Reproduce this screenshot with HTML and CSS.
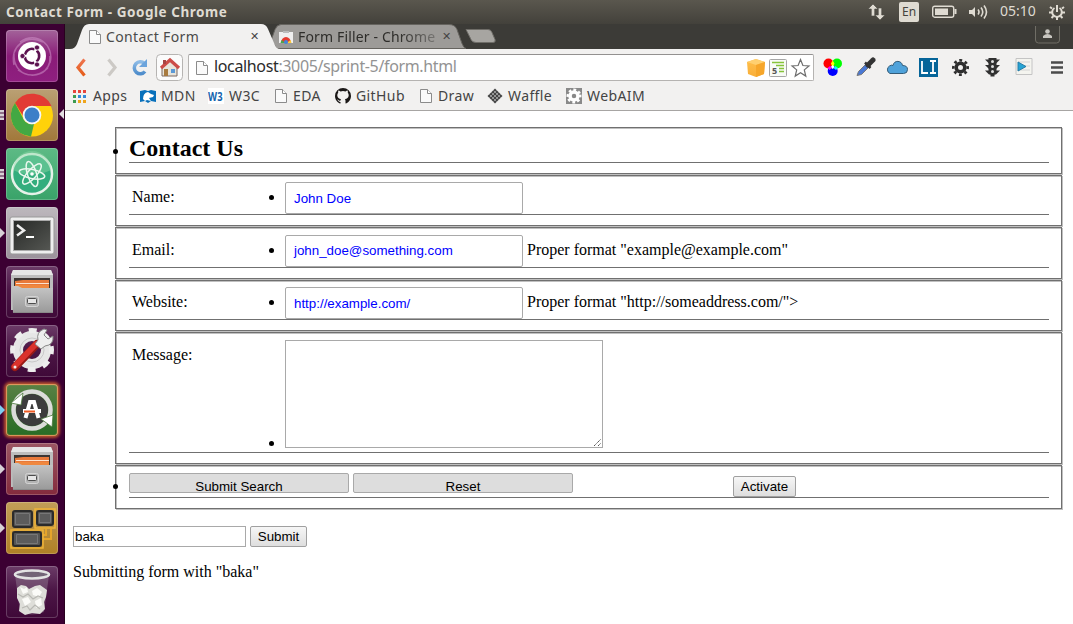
FILE: index.html
```
<!DOCTYPE html>
<html lang="en">
<head>
<meta charset="utf-8">
<title>Contact Form</title>
<link rel="stylesheet" href="styles.css">
</head>
<body>
<svg width="0" height="0" class="defs">
  <defs>
    <linearGradient id="metal" x1="0" y1="0" x2="0" y2="1"><stop offset="0" stop-color="#c6c6c6"/><stop offset="1" stop-color="#999"/></linearGradient>
    <linearGradient id="black" x1="0" y1="0" x2="1" y2="1"><stop offset="0" stop-color="#272927"/><stop offset="1" stop-color="#555753"/></linearGradient>
    <linearGradient id="gold" x1="0" y1="0" x2="0" y2="1"><stop offset="0" stop-color="#ffc04c"/><stop offset="1" stop-color="#f9ae38"/></linearGradient>
    <linearGradient id="refresh" x1="0" y1="0" x2="0" y2="1"><stop offset="0" stop-color="#8dbbe6"/><stop offset="1" stop-color="#4f8dcb"/></linearGradient>
    <linearGradient id="orange" x1="0" y1="0" x2="0" y2="1"><stop offset="0" stop-color="#ee7550"/><stop offset="1" stop-color="#e55d18"/></linearGradient>
    <symbol id="page" viewBox="0 0 12 14"><path d="M.5 .5h7l4 4v9H.5z" fill="#fafafa" stroke="#8b8b8b"/><path d="M7.500 .5v4h4" fill="#fff" stroke="#8b8b8b"/></symbol>
    <symbol id="cabinet" viewBox="0 0 52 52">
      <path d="M7 4h38l2 5v35H5V9z" fill="#bdbdbd"/><path d="M7 4h38l2 5H5z" fill="#e6e6e6"/>
      <path d="M8 12h36v10H8z" fill="#3c3634"/><path d="M9 15l8-1h26v8H9z" fill="#e8793a"/><path d="M10 17.500h33" stroke="#fbe3d0"/><path d="M9 19h34v3H9z" fill="#f0883f"/>
      <path d="M6 20h6l4 2h31v25H7z" fill="url(#metal)"/><path d="M7 46.500h40" stroke="#8a8a8a"/>
      <rect x="19.500" y="30.500" width="13" height="10" rx="2" fill="#b4b4b4" stroke="#d4d4d4"/><rect x="21.500" y="32.500" width="9" height="5" rx="1" fill="#e6e6e6" stroke="#4c4c4c"/>
    </symbol>
  </defs>
</svg>

<header class="titlebar">
  <b class="wintitle">Contact Form - Google Chrome</b>
  <div class="tray">
    <svg width="18" height="18" viewBox="0 0 18 18" fill="#dfdbd2"><path d="M6 1l5 5H7.700v7H4.300V6H1zM13 17l-5-5h3.300V5h3.400v7H18z" stroke="#4b4943" stroke-width=".6"/></svg>
    <span class="lang">En</span>
    <svg class="bat" width="25" height="14" viewBox="0 0 25 14"><rect x=".7" y="1.200" width="21" height="11" rx="2" fill="none" stroke="#dfdbd2" stroke-width="1.400"/><path d="M3 3.500h13v6.500H3zM22.500 4h2v5h-2z" fill="#dfdbd2"/></svg>
    <svg class="vol" width="21" height="16" viewBox="0 0 21 16" fill="none" stroke="#dfdbd2" stroke-width="1.600"><path d="M1 6h3l3-3v10l-3-3H1z" fill="#dfdbd2" stroke="none"/><path d="M10 5.500q2 2.500 0 5M13 3.500q3.500 4.500 0 9M16 1.500q5 6.500 0 13"/></svg>
    <span class="clock">05:10</span>
    <svg class="power" width="18" height="18" viewBox="0 0 18 18" fill="none" stroke="#dfdbd2" stroke-width="2"><path d="M6.500 5a4.800 4.800 0 1 0 5 0M9 2v7" /><path d="M2 4l2 1.500M16 4l-2 1.500M1 9.500h3M14 9.500h3M3.500 15l2-2M14.500 15l-2-2M9 14v3"/></svg>
  </div>
</header>

<div class="desktop">
<nav class="launcher">
  <div class="tile ubuntu"><svg viewBox="0 0 52 52"><g fill="none" stroke="#d69bd0" stroke-opacity=".5" stroke-width="1.500"><path d="M8 35C4 16 20 4 37 12M14 12C30 0 49 15 44 33M44 26C45 43 28 51 12 40M8 24C7 44 27 52 42 38"/></g><circle cx="26" cy="26" r="14" fill="#fff"/><circle cx="26" cy="26" r="7.200" fill="none" stroke="#5c1250" stroke-width="2.600" stroke-dasharray="12.600 2.480" transform="rotate(190 26 26)"/><g fill="#5c1250" stroke="#fff" stroke-width=".8"><circle cx="16.500" cy="26" r="2.600"/><circle cx="31" cy="17.500" r="2.600"/><circle cx="31" cy="34.500" r="2.600"/></g></svg></div>
  <div class="tile chrome"><svg viewBox="0 0 52 52"><circle cx="26" cy="26.500" r="21" fill="#ffd20a"/><path d="M9 14A21 21 0 0 1 45.500 17H26a9 9 0 0 0-9 10z" fill="#e23b34"/><path d="M9 14l9 17q3 5 10 4L25 47.500A21 21 0 0 1 9 14z" fill="#43a843"/><circle cx="26" cy="26" r="9.300" fill="#f3f6fa"/><circle cx="26" cy="26" r="7.500" fill="#3c7fc8"/></svg><i class="pips"></i><i class="focus"></i></div>
  <div class="tile atom"><svg viewBox="0 0 52 52"><circle cx="26" cy="26" r="20" fill="#33ad7d" stroke="#e6f2e9" stroke-width="2.500"/><path d="M7 22a19 19 0 0 1 38 0q-19 9-38 0" fill="#8fd9a8" opacity=".45"/><g fill="none" stroke="#eaf7ee" stroke-width="1.500"><ellipse cx="26" cy="26" rx="13" ry="4.500" transform="rotate(12 26 26)"/><ellipse cx="26" cy="26" rx="13" ry="4.500" transform="rotate(72 26 26)"/><ellipse cx="26" cy="26" rx="13" ry="4.500" transform="rotate(132 26 26)"/></g><circle cx="26" cy="26" r="1.800" fill="#fff"/></svg><i class="pips"></i></div>
  <div class="tile terminal"><svg viewBox="0 0 52 52"><rect x="4" y="10" width="44" height="37" rx="2" fill="#eee" stroke="#999"/><rect x="7.500" y="13.500" width="37" height="30" fill="url(#black)" stroke="#aaa"/><path d="M11 18l7 5.500-7 5" fill="none" stroke="#eee" stroke-width="2.500"/><path d="M20 30h8" stroke="#fff" stroke-width="2"/></svg><i class="run"></i></div>
  <div class="tile"><svg viewBox="0 0 52 52"><use href="#cabinet"/></svg></div>
  <div class="tile"><svg viewBox="0 0 52 52"><g transform="translate(26 25)"><circle r="14" fill="none" stroke="#e6e6e6" stroke-width="10"/><circle r="19.500" fill="none" stroke="#ededed" stroke-width="5" stroke-dasharray="7.660 7.660" transform="rotate(-11)"/><circle r="12" fill="none" stroke="#c8c8c8"/></g><path d="M9 42L31 19" stroke="#981916" stroke-width="8" stroke-linecap="round"/><path d="M8.500 41.500L30 19" stroke="#da322c" stroke-width="5.500" stroke-linecap="round"/><path d="M29 19l3-4q-2-8 6-11l3 1-3 5 4 4 5-3q1 9-8 10l-4 3z" fill="#eee" stroke="#888"/><circle cx="9" cy="42" r="1.500" fill="#eee"/></svg></div>
  <div class="tile updater"><svg viewBox="0 0 52 52"><circle cx="26" cy="26" r="16" fill="#3c3c3c"/><circle cx="26" cy="26" r="18.500" fill="none" stroke="#dcdcda" stroke-width="4.500"/><path d="M17 9l-2 12-10-2z" fill="#fff" stroke="#4c7a3c" stroke-width=".8"/><path d="M35 35l12-4-1 12z" fill="#fff" stroke="#4c7a3c" stroke-width=".8"/><path d="M19.500 34l4.500-16h4l4.500 16" fill="none" stroke="#fff" stroke-width="4"/><path d="M17 27h18" stroke="#fff" stroke-width="4"/><path d="M18 27.500h11" stroke="#ee5b24" stroke-width="2"/></svg><i class="run blue"></i></div>
  <div class="tile files"><svg viewBox="0 0 52 52"><use href="#cabinet"/></svg><i class="run"></i></div>
  <div class="tile workspace"><svg viewBox="0 0 52 52"><path d="M45 27v10h-8M40 27v6h-3" fill="none" stroke="#e5a52b" stroke-width="2"/><path d="M29 7h20v19H29zM5 28h32v18H5z" fill="none" stroke="#f0b439" stroke-width="1.500"/><g fill="#555" stroke="#2b2b2b" stroke-width="2"><rect x="7" y="9" width="19" height="16" rx="2"/><rect x="31" y="9" width="16" height="14" rx="2"/><rect x="7" y="30" width="28" height="14" rx="2"/></g><g fill="#5c5c5c" stroke="#777"><path d="M9.500 11.500h14v11h-14zM33.500 11.500h11v9h-11zM10.500 32.500h21v9h-21z"/></g></svg><i class="run"></i></div>
  <div class="tile trash"><svg viewBox="0 0 52 52"><path d="M9 9l5 37q12 5 24 0l5-37z" fill="#aaa0ad" opacity=".35"/><path d="M11 22l4-3 5 1 3 3 6-3 5-1 7 5-1 7-2 5 1 7-5 5-8-1-7 2-6-4 1-7-3-6z" fill="#deded9"/><path d="M14 21l4 2 3-2 1 5-5 2zM26 25l5-3 5 4-3 5-6-2zM16 33l6-2 3 5-6 4zM29 35l6-3 1 7-6 3z" fill="#fbfbf8"/><path d="M12 28l5 3 5-3 5 5 5-3 5 2M16 42l5-2 3 4 5-5 5 4" fill="none" stroke="#b9b9b4" stroke-width="1.200"/><ellipse cx="26" cy="8.500" rx="17" ry="4" fill="#736477" stroke="#e3e3e3" stroke-width="2.600"/></svg></div>
</nav>

<div class="browser">
  <div class="tabstrip">
    <svg class="tabshapes" width="1008" height="25" viewBox="0 0 1008 25">
      <path d="M212 24.500l-6-8 4-11q2-5 6-5h168q6 0 8 5l5 14q2 5 4 5z" fill="#9d9b98" stroke="#66645f"/>
      <path d="M0 25h5q5 0 7-5l5-14q2-6 7-6h172q5 0 7 5l6 14q2 6 6 6z" fill="#f2f1f0"/>
      <path d="M401 5.500h22q3 0 4 3l3 7q1 3-2 3h-17q-4 0-5-3l-4-8z" fill="#a7a5a1" stroke="#6f6d68"/>
      <path d="M970.500 2v14q0 3 3 3h18q3 0 3-3V2" fill="#403f3a" stroke="#706e66"/><circle cx="982.500" cy="7.500" r="2.300" fill="#c8c6c0"/><path d="M978 14v-2q4.500-4 9 0v2z" fill="#c8c6c0"/>
    </svg>
    <div class="tablabels">
      <svg width="12" height="14"><use href="#page"/></svg><span class="t1">Contact Form</span><span class="x">✕</span>
      <svg width="14" height="14" viewBox="0 0 14 14"><path d="M0 2h14v11H0z" fill="#efefef"/><path d="M2 13a5 6 0 0 1 10 0z" fill="#e43b30"/><path d="M1.500 13l1-3 4 3z" fill="#4aa84a"/><path d="M12.500 13l-1-3-4 3z" fill="#fc3"/><circle cx="7" cy="12" r="2" fill="#4285d8"/><path d="M4 2h6" stroke="#bbb" stroke-width="2"/></svg><span class="t2">Form Filler - Chrome</span><span class="x">✕</span>
    </div>
  </div>
  <div class="toolbar">
    <svg class="navs" width="120" height="32" viewBox="0 0 120 32">
      <path d="M19.500 10.500l-6.500 8 6.500 8" fill="none" stroke="url(#orange)" stroke-width="3.200"/>
      <path d="M43.500 10.500l6.500 8-6.500 8" fill="none" stroke="#ccc9c5" stroke-width="3.200"/>
      <path d="M80 22.500a6 6 0 1 1-.5-8" fill="none" stroke="url(#refresh)" stroke-width="3.500"/><path d="M82 10v8h-8z" fill="#6ca4dc"/>
      <rect x="91.500" y="5.500" width="26" height="26" rx="4" fill="#fbfbfb" stroke="#b6b4b2"/>
      <path d="M97 18v9h15v-9l-7-6z" fill="#e7e4db" stroke="#7a6960"/><path d="M96 19l9-8 9 8" fill="none" stroke="#cc4c48" stroke-width="3.200"/><path d="M98 11h3v4h-3z" fill="#a74543"/><path d="M99 20h4v7h-4z" fill="#a87b40"/><path d="M106 20h4v4h-4z" fill="#5b99d6"/>
    </svg>
    <div class="address">
      <svg width="12" height="14"><use href="#page"/></svg>
      <span class="url"><em>localhost</em>:3005/sprint-5/form.html</span>
      <svg class="addricons" width="64" height="20" viewBox="0 0 64 20">
        <path d="M0 4l9-3 9 3-1 12-8 3-8-3z" fill="url(#gold)"/><path d="M0 4l9 3 9-3-9-3z" fill="#ffd070"/><path d="M9 7v12l8-3 1-12z" fill="#f6a62a"/>
        <rect x="22.500" y="1.500" width="17" height="17" rx="1" fill="#f8fbf6" stroke="#a6a6a6"/><path d="M25 4.500h12M29 7.500h8M32 10.500h5M32 13.500h5" stroke="#86c43a" stroke-width="1.600"/><text x="25" y="16" class="five">5</text>
        <path d="M53.500 1.500l2.400 6 6.100.4-4.700 4 1.500 6.200-5.300-3.300-5.300 3.300 1.500-6.200-4.700-4 6.100-.4z" fill="#fff" stroke="#6d6d6d" stroke-width="1.200"/>
      </svg>
    </div>
    <svg class="exts" width="249" height="22" viewBox="0 0 249 22">
      <circle cx="14.500" cy="6.500" r="5" fill="red"/><circle cx="23" cy="6.500" r="5" fill="#0f0"/><circle cx="18.700" cy="14" r="5" fill="#00f"/><path d="M18.700 3.500l1.800 3-1.800 4-1.800-4z" fill="#ff0"/><path d="M18.700 8l2 2-2 2-2-2z" fill="#fff"/><path d="M19.500 11l2-2 2.500 2-2 2z" fill="#0ff"/><path d="M18 11l-2-2-2.500 2 2 2z" fill="#f0f"/>
      <path d="M43 18.500l1.500-4 8-8 3 3-8 8z" fill="#4b79d4" stroke="#777"/><path d="M51 5.500l5.500 5.500" stroke="#333" stroke-width="2.500"/><path d="M54 8l5-5" stroke="#333" stroke-width="5" stroke-linecap="round"/>
      <path d="M77 16a4.200 4.200 0 0 1-.5-7.500q2-1.500 3.500-.5c1-6 9-5 9.500 0q5 0 5 4t-4 4z" fill="#4fa2da" stroke="#345c78" transform="translate(-1 .500)"/>
      <path d="M105 1h19v19h-19z" fill="#066599"/><path d="M108 4v12h6M116 4h6M119 4v12M116 16h6" fill="none" stroke="#fff" stroke-width="1.800"/>
      <circle cx="146.500" cy="10.500" r="4.300" fill="none" stroke="#2e2e2e" stroke-width="3.600"/><circle cx="146.500" cy="10.500" r="7.200" fill="none" stroke="#2e2e2e" stroke-width="2.600" stroke-dasharray="2.800 2.855" transform="rotate(-11 146.500 10.500)"/>
      <path d="M174.500 1h8v15l-2 1.500v2h-4v-2l-2-1.500z" fill="#303030"/><path d="M171 2.500h15l-4 4h-7zM171 8h15l-4 4h-7zM171 13.500h15l-4 4h-7z" fill="#303030"/><g fill="#ddd"><circle cx="178.500" cy="4.500" r="1.500"/><circle cx="178.500" cy="9.500" r="1.500"/><circle cx="178.500" cy="14.500" r="1.500"/></g>
      <path d="M202 1.500h16v16h-16z" fill="#f4f4ef" stroke="#c4c4c4"/><path d="M204 5h12M204 9h12M204 13h12" stroke="#d4d4d4"/><path d="M204 5l8 4.500-8 4.500z" fill="#25a4d4" stroke="#267ba6"/>
      <path d="M237 5.500h13M237 10.500h13M237 15.500h13" stroke="#4b4b4b" stroke-width="2.600"/>
    </svg>
  </div>
  <div class="bookmarks">
    <svg width="21" height="16" viewBox="0 0 21 16"><g stroke-width="3" stroke-dasharray="3 2"><path d="M1 3.500h13" stroke="#e8453c"/><path d="M1 8.500h13" stroke="#348ad8"/><path d="M1 13.500h13" stroke="#efa51c"/></g><path d="M1 7h3v3H1zM1 12h3v3H1z" fill="#3c9b50"/></svg><span>Apps</span>
    <svg width="21" height="16" viewBox="0 0 21 16"><path d="M0 3l5-1 3 1 3-1 5 1v11l-5-1-3 2-3-2-5 1z" fill="#0870bb"/><path d="M3 11q0-6 5-7l3 2 3 1-1 2-4 1 2 3-4-1-2 1z" fill="#fff"/></svg><span>MDN</span>
    <svg width="21" height="16" viewBox="0 0 21 16"><path d="M0 0h16v16H0z" fill="#fff"/><text x="0" y="12.500" class="w3" textLength="15" lengthAdjust="spacingAndGlyphs">W3</text></svg><span>W3C</span>
    <svg width="18" height="14" viewBox="0 0 18 14"><use href="#page" width="12" height="14"/></svg><span>EDA</span>
    <svg width="21" height="16" viewBox="0 0 21 16"><path d="M5.500 15.600C2.300 14.600 0 11.600 0 8a8 8 0 0 1 16 0c0 3.600-2.300 6.600-5.500 7.600V13c0-1-.3-1.500-.7-1.900 2-.2 3.900-1 3.900-4 0-1-.4-1.800-.9-2.300.1-.8.100-1.500-.1-2.200-.7 0-1.500.4-2.200.9a8 8 0 0 0-5 0c-.7-.5-1.500-.9-2.200-.9-.2.700-.2 1.400-.1 2.200-.5.500-.9 1.300-.9 2.300 0 3 1.900 3.800 3.900 4-.4.400-.7.700-.7 1.500-1 .4-1.600.1-2.300-.9L2 11.500c1 .3 1.400 2.800 3.500 2.400z" fill="#1b1817"/></svg><span>GitHub</span>
    <svg width="18" height="14" viewBox="0 0 18 14"><use href="#page" width="12" height="14"/></svg><span>Draw</span>
    <svg width="21" height="16" viewBox="0 0 21 16"><path d="M8 .5L15.500 8 8 15.500.5 8z" fill="#444"/><path d="M2.500 6.500l7 7M4.500 4.500l7 7M6.500 2.500l7 7M2.500 9.500l7-7M4.500 11.500l7-7M6.500 13.500l7-7" stroke="#ccc" stroke-width=".6"/></svg><span>Waffle</span>
    <svg width="21" height="16" viewBox="0 0 21 16"><path d="M0 0h16v16H0z" fill="#898989"/><circle cx="8" cy="8" r="4" fill="none" stroke="#fff" stroke-width="3.500"/><circle cx="8" cy="8" r="6.300" fill="none" stroke="#fff" stroke-width="2.400" stroke-dasharray="2.700 2.248" transform="rotate(-12 8 8)"/></svg><span>WebAIM</span>
  </div>

  <main class="page">
    <form class="contact">
      <section class="box head"><i class="dot edge"></i><h1>Contact Us</h1></section>
      <section class="box name"><label>Name:</label><i class="dot"></i><div class="field">John Doe</div></section>
      <section class="box email"><label>Email:</label><i class="dot"></i><div class="field">john_doe@something.com</div><span class="hint">Proper format "example@example.com"</span></section>
      <section class="box name"><label>Website:</label><i class="dot"></i><div class="field">http://example.com/</div><span class="hint">Proper format "http://someaddress.com/"&gt;</span></section>
      <section class="box message"><label>Message:</label><i class="dot"></i><div class="area"><svg width="9" height="9" viewBox="0 0 9 9"><path d="M1 8l7-7M5 8l3-3" stroke="#555" stroke-dasharray="1.400 .5"/></svg></div></section>
      <section class="box actions"><i class="dot edge"></i><div class="wide">Submit Search</div><div class="wide">Reset</div><div class="btn activate">Activate</div></section>
    </form>
    <div class="extra"><div class="plain">baka</div><div class="btn submit">Submit</div></div>
    <p>Submitting form with "baka"</p>
  </main>
</div>
</div>
</body>
</html>
```
FILE: styles.css
```
* { box-sizing: border-box; }
body { margin: 0; width: 1073px; height: 624px; overflow: hidden; background: #fff; font: 16px "Liberation Serif", serif; color: #000; }
svg { display: block; flex: none; }
.defs { position: absolute; }
i { display: block; }

.titlebar { height: 24px; display: flex; justify-content: space-between; background: linear-gradient(#5a574e, #43413b); font-family: "Noto Sans", sans-serif; color: #dfdbd2; }
.wintitle { padding-left: 6px; font-size: 13.500px; line-height: 24px; letter-spacing: .54px; white-space: nowrap; }
.tray { display: flex; align-items: center; width: 206px; }
.lang { width: 20px; height: 20px; margin-left: 14px; border-radius: 2px; background: #dfdbd2; color: #45433d; font-size: 12px; line-height: 20px; text-align: center; }
.bat { margin-left: 13px; }
.vol { margin-left: 11px; }
.clock { width: 37px; margin-left: 11px; font-size: 14px; letter-spacing: 0; line-height: 22px; padding-bottom: 2px; }
.power { margin-left: 11px; }

.desktop { display: flex; height: 600px; }
.launcher { width: 65px; padding: 6px 0 0 6px; display: flex; flex-direction: column; gap: 7px; background: #3c0033; border-right: 1px solid #29001f; }
.tile { position: relative; width: 52px; height: 52px; flex: none; border-radius: 4px; background: linear-gradient(#6c3c68, #4d1747 45%, #3f0938); box-shadow: inset 0 0 0 1px #ffffff33; }
.tile svg { width: 52px; height: 52px; }
.ubuntu { background: linear-gradient(#a3639a, #8a1c78 50%, #8f1f80); }
.chrome { background: linear-gradient(#baa074, #a1783a); }
.atom { background: linear-gradient(#5dba85, #39a369); }
.terminal { background: linear-gradient(#bdb8bd, #9b929b); }
.updater { background: linear-gradient(#598144, #286c25); box-shadow: 0 0 3px 2px #b9532f, inset 0 0 1px 1px #ed9b60; }
.files { background: linear-gradient(#9b5663, #842b3d); }
.workspace { background: linear-gradient(#c19e58, #b08026); }
.trash { margin-top: 5px; }
.run, .focus { position: absolute; top: 21px; border: 5px solid transparent; }
.run { left: -6px; border-left-color: #d7d1d6; border-right: 0; }
.run.blue { border-left-color: #7fcdf0; }
.focus { right: -6px; top: 20px; border-right-color: #e3dfe2; border-left: 0; }
.pips { position: absolute; left: -6px; top: 21px; width: 4px; height: 10px; background: repeating-linear-gradient(#d7d1d6 0 2px, #8f7089 2px 4px); }

.browser { width: 1008px; }
.tabstrip { height: 25px; background: #3c3b37; font-family: "Noto Sans", sans-serif; position: relative; }
.tablabels { position: absolute; inset: 0; display: flex; align-items: center; padding-left: 24px; font-size: 14px; color: #4a4a4a; white-space: nowrap; }
.t1 { width: 144px; padding-left: 5px; letter-spacing: .35px; }
.t2 { width: 148px; padding-left: 5px; color: #2e2d2a; letter-spacing: .15px; overflow: hidden; -webkit-mask-image: linear-gradient(90deg, #000 105px, #0005 143px); mask-image: linear-gradient(90deg, #000 105px, #0005 143px); }
.x { width: 34px; padding-left: 4px; font: 11px "DejaVu Sans", sans-serif; color: #444; }
.t1 + .x { padding-left: 5px; }
.t2 + .x { padding-left: 1px; }
.toolbar { height: 32px; display: flex; background: #f2f1f0; font-family: "Noto Sans", sans-serif; }
.address { width: 626px; height: 27px; margin: 5px 0 0 3px; padding-left: 7px; display: flex; align-items: center; background: #fff; border: 1px solid #b5b3b1; border-top-color: #939190; border-radius: 2px; }
.url { flex: 1; padding: 0 0 2px 6px; font-size: 16px; letter-spacing: -.36px; line-height: 23px; color: #939393; white-space: nowrap; }
.url em { font-style: normal; color: #2b2b2b; }
.addricons { margin-right: 2px; }
.five { font: bold 9px "Noto Sans", sans-serif; fill: #555; }
.w3 { font: bold 12px "Noto Sans", sans-serif; fill: #1463ae; }
.exts { margin-top: 8px; }
.bookmarks { height: 30px; padding-left: 7px; display: grid; grid-template-columns: 21px 47px 21px 47px 21px 46px 18px 42px 21px 64px 18px 49px 21px 58px 21px 80px; align-items: center; background: #f2f1f0; border-bottom: 1px solid #a7a5a3; font: 14px "Noto Sans", sans-serif; letter-spacing: .4px; color: #444; white-space: nowrap; }

.page { padding: 16px 10px 0 8px; }
.contact { margin-left: 42px; }
.box { position: relative; display: flex; width: 947px; margin-bottom: 1px; padding: 0 11px 0 13px; border: 1px solid #707070; box-shadow: 1px 1px #c0c0c0, inset 1px 1px #c0c0c0; }
.box::after { content: ""; position: absolute; left: 13px; width: 920px; bottom: 10px; height: 1px; background: #707070; }
.head { height: 47px; }
.name { height: 51px; }
.email { height: 52px; }
.message { height: 132px; }
.actions { height: 44px; }
h1 { margin: 0; padding-top: 7px; font-size: 24px; line-height: 27px; }
label { width: 140px; padding: 12px 0 0 3px; line-height: 18px; }
.dot { width: 5px; height: 5px; margin: 19px 11px 0 0; border-radius: 50%; background: #000; }
.edge { position: absolute; left: -3px; margin: 0; top: 21px; }
.actions .edge { top: 18px; }
.field { width: 238px; height: 32px; margin-top: 6px; padding-left: 8px; border: 1px solid #a9a9a9; border-radius: 2px; font: 13.333px/31px "Liberation Sans", sans-serif; color: #00f; }
.hint { padding: 12px 0 0 4px; line-height: 18px; }
.email label, .email .hint, .message label { padding-top: 13px; }
.email .dot { margin-top: 20px; }
.email .field { margin-top: 7px; line-height: 29px; }
.message .dot { margin-top: 108px; }
.area { width: 318px; height: 108px; margin-top: 7px; border: 1px solid #a9a9a9; display: flex; justify-content: flex-end; align-items: flex-end; }
.wide { width: 220px; height: 20px; margin: 7px 4px 0 0; padding-top: 4px; border: 1px solid #a9a9a9; border-radius: 2px; background: #ddd; font: 13.333px/17px "Liberation Sans", sans-serif; text-align: center; }
.btn { height: 21px; border: 1px solid #a0a0a0; border-radius: 2px; background: linear-gradient(#f6f6f6, #dedede); font: 13.333px/19px "Liberation Sans", sans-serif; text-align: center; }
.activate { width: 63px; margin: 10px 0 0 156px; }
.extra { display: flex; gap: 4px; margin-top: 17px; }
.plain { width: 173px; height: 21px; padding-left: 1px; border: 1px solid #a9a9a9; font: 13.333px/19px "Liberation Sans", sans-serif; }
.submit { width: 57px; }
p { margin: 16px 0 0; line-height: 18px; }
```
